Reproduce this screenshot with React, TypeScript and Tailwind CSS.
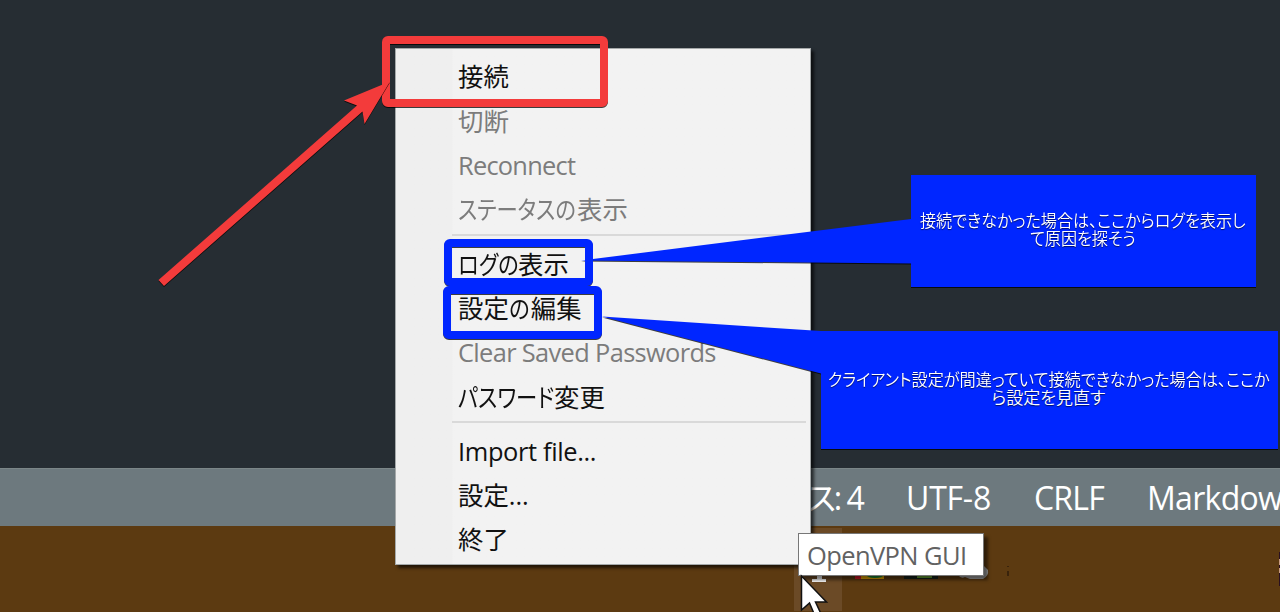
type Part = { text: string; width?: string };
type Item = { parts: Part[]; className?: string; disabled?: boolean };

const groups: Item[][] = [
  [
    { parts: [{ text: '接続' }] },
    { parts: [{ text: '切断' }], disabled: true },
    { parts: [{ text: 'Reconnect' }], className: 'tracking-[-0.75px]', disabled: true },
    { parts: [{ text: 'ステータスの', width: 'w-[119px]' }, { text: '表示' }], disabled: true },
  ],
  [
    { parts: [{ text: 'ログの', width: 'w-[60px]' }, { text: '表示' }] },
    { parts: [{ text: '設定' }, { text: 'の', width: 'w-[22px]' }, { text: '編集' }] },
    { parts: [{ text: 'Clear Saved Passwords' }], className: 'tracking-[-0.65px]', disabled: true },
    { parts: [{ text: 'パスワード', width: 'w-[96px]' }, { text: '変更' }] },
  ],
  [
    { parts: [{ text: 'Import file...' }], className: 'tracking-[-0.35px]' },
    { parts: [{ text: '設定...' }] },
    { parts: [{ text: '終了' }] },
  ],
];

const uiFont = "font-['Open_Sans','Noto_Sans_CJK_JP',sans-serif]";

function Menu() {
  return (
    <div className="absolute left-[395px] top-[48px] flex h-[517px] w-[416px] flex-col border border-[#a5a9aa] bg-[#f2f2f2] bg-linear-to-r from-[#efefef] from-[56px] to-[#f2f2f2] to-[57px] pt-[6px] shadow-[3px_3px_3px_rgba(0,0,0,0.65)]">
      {groups.map((group, i) => (
        <div key={i}>
          {i > 0 && <div className="mt-[2px] mb-[6px] ml-[56px] mr-[4px] h-[2px] bg-[#d9d9d9]" />}
          {group.map((item) => (
            <div
              key={item.parts[0].text}
              className={`flex h-[44.3px] items-center whitespace-nowrap pl-[62px] text-[25.4px] leading-none [font-feature-settings:'palt'] ${item.disabled ? 'text-[#7c7c7c]' : 'text-[#111]'} ${item.className ?? ''}`}
            >
              {item.parts.map((part) =>
                part.width ? (
                  <span key={part.text} className={`shrink-0 ${part.width}`}>
                    <span className="inline-block origin-left scale-x-[0.84]">{part.text}</span>
                  </span>
                ) : (
                  <span key={part.text}>{part.text}</span>
                ),
              )}
            </div>
          ))}
        </div>
      ))}
    </div>
  );
}

function Tray() {
  return (
    <div className="relative h-[86px] bg-[#5c3a11]">
      <div className="absolute left-[794px] top-[2px] h-[83px] w-[48px] bg-[#6b4a26]" />
      <svg className="absolute left-[794px] top-[40px]" width="230" height="20" viewBox="794 566 230 20">
        <path d="M817 570h5v9h4v3h-14v-3h5z" fill="#f5f5f5" />
        <path d="M855 575h29v4h-29z" fill="#e6a700" />
        <path d="M855 575h6v4h-6z" fill="#d71928" />
        <path d="M866 575h18q-2 3-9 3t-9-3z" fill="#188b35" />
        <path d="M904 575h34v4h-34z" fill="#17231b" />
        <path d="M917 575h15v3h-15z" fill="#68a534" />
        <path d="M958 575q3 4 7 2l5 2h13q6-3 5-9l-4-4v9z" fill="#a8a8a8" />
        <path d="M1008 563v4M1008 571v5" stroke="#24150a" strokeWidth="1.2" />
      </svg>
      <svg className="absolute right-0 top-[26px]" width="1" height="34">
        <path d="M0 0h1v34H0z" fill="#2b1020" />
        <path d="M0 7h1v6H0zM0 16h1v5H0z" fill="#c79b82" />
      </svg>
    </div>
  );
}

function Annotations() {
  return (
    <svg className="absolute left-0 top-0" width="1280" height="612" viewBox="0 0 1280 612">
      <g className="[filter:drop-shadow(0_1px_0.5px_rgba(0,0,0,0.75))]">
        <rect x="386" y="40" width="218" height="63" rx="2" fill="none" stroke="#f33b3b" strokeWidth="8" />
      </g>
      <g className="[filter:drop-shadow(0_1px_0.5px_rgba(0,0,0,0.75))]">
        <path d="M158.500 280L357 105.500L344 100.500L390 81.500L364.500 124L362.500 111.500L164 286z" fill="#f33b3b" />
      </g>
      <g className="[filter:drop-shadow(0_1px_0.5px_rgba(0,0,0,0.75))]" fill="#0026ff">
        <path d="M581 260.500L911 219V175H1256V287H911V263.500z" />
        <path d="M602 316.500L821 331H1278V449H821V373.500z" />
      </g>
      <g className="[filter:drop-shadow(0_1px_0.5px_rgba(0,0,0,0.75))]" fill="none" stroke="#0026ff" strokeWidth="8">
        <rect x="448" y="243" width="141" height="39" rx="2" />
        <rect x="447" y="290" width="151" height="45" rx="2" />
      </g>
    </svg>
  );
}

const note =
  "absolute flex flex-col items-center justify-center whitespace-nowrap text-[17px] leading-[18px] font-[350] text-white font-['Noto_Sans_CJK_JP',sans-serif] [font-feature-settings:'palt'] [text-shadow:0_1px_1px_rgba(0,0,0,0.6)]";

export default function App() {
  return (
    <main className={`relative h-[612px] w-[1280px] overflow-hidden bg-[#262d33] ${uiFont}`}>
      <div className="flex h-full flex-col">
        <div className="flex-1" />
        <footer className="flex h-[58px] items-center border-t border-[#7b8688] bg-[#6d797e] pl-[807px] text-[32px] leading-none font-medium whitespace-nowrap text-white">
          <span className="w-[99px] shrink-0 tracking-[-2px] [font-feature-settings:'palt']">
            <span className="font-normal">ス</span>: 4
          </span>
          <span className="w-[128px] shrink-0 tracking-[-0.2px]">UTF-8</span>
          <span className="w-[113px] shrink-0 tracking-[-0.8px]">CRLF</span>
          <span className="tracking-[-0.7px]">Markdown</span>
        </footer>
        <Tray />
      </div>
      <Menu />
      <Annotations />
      <div className={`${note} left-[911px] top-[174px] h-[110px] w-[343px]`}>
        <span className="scale-x-[0.948]">接続できなかった場合は、ここからログを表示し</span>
        <span className="scale-x-[0.945]">て原因を探そう</span>
      </div>
      <div className={`${note} left-[821px] top-[329px] h-[118px] w-[455px]`}>
        <span className="scale-x-[0.95]">クライアント設定が間違っていて接続できなかった場合は、ここか</span>
        <span>ら設定を見直す</span>
      </div>
      <div className="absolute left-[798px] top-[533px] flex h-[43px] w-[186px] items-center border border-[#777] bg-white pl-[8px] text-[25.5px] leading-none whitespace-nowrap text-[#626262] shadow-[4px_4px_3px_rgba(0,0,0,0.5)]">
        <span className="relative top-px tracking-[-0.6px]">OpenVPN GUI</span>
      </div>
      <svg className="absolute left-[798px] top-[572px]" width="34" height="40" viewBox="798 572 34 40">
        <path d="M801.500 576V610L809.500 603L815 616H822L815.500 602H826.500z" fill="white" stroke="#111" strokeWidth="1.5" />
      </svg>
    </main>
  );
}
